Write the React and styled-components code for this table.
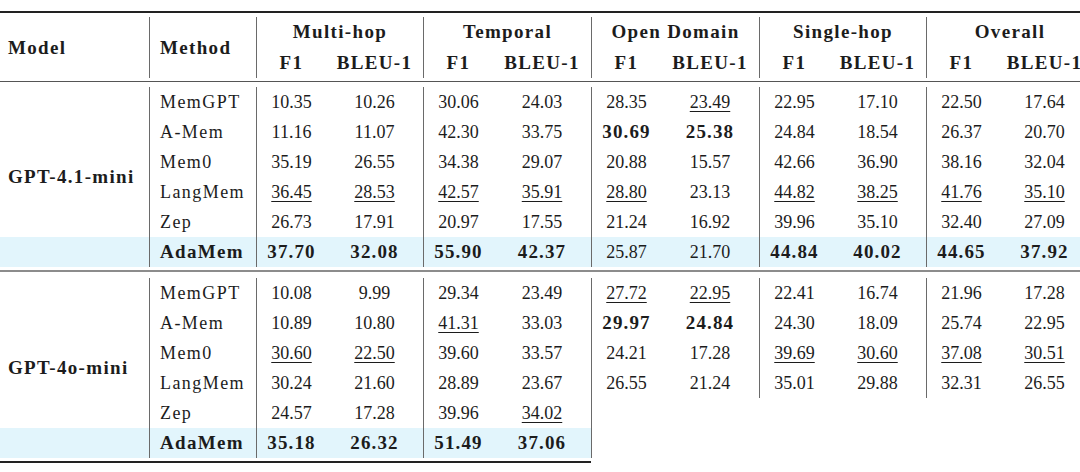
import React from 'react';
import styled, { createGlobalStyle } from 'styled-components';

const GlobalStyle = createGlobalStyle`
  html, body {
    margin: 0;
    background: #fff;
    overflow: hidden;
  }
  body {
    font-family: "Liberation Serif", "Times New Roman", serif;
    color: #1c1c1c;
  }
`;

const HL = '#e2f5fc';
const LINE = '1px solid #6a6a6a';

const Table = styled.table`
  margin-top: 11px;
  width: 1093px;
  table-layout: fixed;
  border-collapse: separate;
  border-spacing: 0;
`;

const Col = styled.col`
  width: ${p => p.$w}px;
`;

const RuleCell = styled.td`
  height: ${p => p.$h}px;
  padding: 0;
  font-size: 0;
  line-height: 0;
  background: ${p => p.$c || 'transparent'};
`;

const HeadCell = styled.th`
  height: ${p => p.$h || 30}px;
  padding: 0 0 0 ${p => p.$pl || 0}px;
  font-size: 19px;
  font-weight: bold;
  letter-spacing: 0.07em;
  text-align: ${p => (p.$left ? 'left' : 'center')};
  vertical-align: middle;
  white-space: nowrap;
  border-left: ${p => (p.$start ? LINE : 'none')};
`;

const ModelCell = styled.td`
  padding: 0 0 0 8px;
  font-size: 19px;
  font-weight: bold;
  letter-spacing: 0.07em;
  vertical-align: middle;
  white-space: nowrap;
  background: linear-gradient(
    to bottom,
    transparent calc(100% - 30px),
    ${HL} calc(100% - 30px)
  );
`;

const MethodCell = styled.td`
  height: 30px;
  padding: 0 0 0 10px;
  font-size: ${p => (p.$b ? 19 : 18)}px;
  font-weight: ${p => (p.$b ? 'bold' : 'normal')};
  letter-spacing: ${p => (p.$b ? '0.07em' : '0.08em')};
  white-space: nowrap;
  border-left: ${LINE};
  background: ${p => (p.$hl ? HL : 'transparent')};
`;

const Cell = styled.td`
  height: 30px;
  padding: 0;
  font-size: 18px;
  text-align: center;
  vertical-align: middle;
  white-space: nowrap;
  border-left: ${p => (p.$start ? LINE : 'none')};
  background: ${p => (p.$hl ? HL : 'transparent')};
`;

const Num = styled.span`
  font-size: ${p => (p.$b ? 19 : 18)}px;
  font-weight: ${p => (p.$b ? 'bold' : 'normal')};
  letter-spacing: ${p => (p.$b ? '0.06em' : '0')};
  text-decoration: ${p => (p.$u ? 'underline' : 'none')};
  text-decoration-thickness: 1px;
  text-underline-offset: 3px;
`;

const widths = [149, 107, 70, 97, 70, 98, 70, 98, 70, 97, 70, 97];
const groups = ['Multi-hop', 'Temporal', 'Open Domain', 'Single-hop', 'Overall'];

const data = [
  {
    model: 'GPT-4.1-mini',
    rows: [
      ['MemGPT', '10.35 10.26 30.06 24.03 28.35 _23.49 22.95 17.10 22.50 17.64'],
      ['A-Mem', '11.16 11.07 42.30 33.75 *30.69 *25.38 24.84 18.54 26.37 20.70'],
      ['Mem0', '35.19 26.55 34.38 29.07 20.88 15.57 42.66 36.90 38.16 32.04'],
      ['LangMem', '_36.45 _28.53 _42.57 _35.91 _28.80 23.13 _44.82 _38.25 _41.76 _35.10'],
      ['Zep', '26.73 17.91 20.97 17.55 21.24 16.92 39.96 35.10 32.40 27.09'],
      ['AdaMem', '*37.70 *32.08 *55.90 *42.37 25.87 21.70 *44.84 *40.02 *44.65 *37.92']
    ]
  },
  {
    model: 'GPT-4o-mini',
    rows: [
      ['MemGPT', '10.08 9.99 29.34 23.49 _27.72 _22.95 22.41 16.74 21.96 17.28'],
      ['A-Mem', '10.89 10.80 _41.31 33.03 *29.97 *24.84 24.30 18.09 25.74 22.95'],
      ['Mem0', '_30.60 _22.50 39.60 33.57 24.21 17.28 _39.69 _30.60 _37.08 _30.51'],
      ['LangMem', '30.24 21.60 28.89 23.67 26.55 21.24 35.01 29.88 32.31 26.55'],
      ['Zep', '24.57 17.28 39.96 _34.02 - - - - - -'],
      ['AdaMem', '*35.18 *26.32 *51.49 *37.06 - - - - - -']
    ]
  }
];

const Rule = ({ h, c }) => (
  <tr>
    <RuleCell colSpan={12} $h={h} $c={c} />
  </tr>
);

const value = (raw, i, isAda) => {
  if (raw === '-') {
    // faded-out part of the original picture
    return <Cell key={i} $start={i === 4} />;
  }
  const b = raw[0] === '*';
  const u = raw[0] === '_';
  const v = b || u ? raw.slice(1) : raw;
  return (
    <Cell key={i} $start={i % 2 === 0} $hl={isAda}>
      <Num $b={b} $u={u}>{v}</Num>
    </Cell>
  );
};

const Group = ({ model, rows }) => (
  <>
    {rows.map(([method, vals], r) => {
      const isAda = method === 'AdaMem';
      return (
        <tr key={method}>
          {r === 0 && <ModelCell rowSpan={rows.length}>{model}</ModelCell>}
          <MethodCell $b={isAda} $hl={isAda}>{method}</MethodCell>
          {vals.split(' ').map((raw, i) => value(raw, i, isAda))}
        </tr>
      );
    })}
  </>
);

export default function App() {
  return (
    <>
      <GlobalStyle />
      <Table>
        <colgroup>
          {widths.map((w, i) => <Col key={i} $w={w} />)}
        </colgroup>
        <thead>
          <Rule h={2} c="#222" />
          <Rule h={4} />
          <tr>
            <HeadCell rowSpan={2} $left $pl={8}>Model</HeadCell>
            <HeadCell rowSpan={2} $left $pl={10} $start>Method</HeadCell>
            {groups.map(g => (
              <HeadCell key={g} colSpan={2} $start>{g}</HeadCell>
            ))}
          </tr>
          <tr>
            {groups.map(g => (
              <React.Fragment key={g}>
                <HeadCell $h={31} $start>F1</HeadCell>
                <HeadCell $h={31}>BLEU-1</HeadCell>
              </React.Fragment>
            ))}
          </tr>
          <Rule h={3} />
          <Rule h={1} c="#555" />
        </thead>
        <tbody>
          <Rule h={5} />
          <Group {...data[0]} />
          <Rule h={3} />
          <Rule h={2} c="#8c8c8c" />
          <Rule h={6} />
          <Group {...data[1]} />
          <Rule h={3} />
          <tr>
            <RuleCell colSpan={6} $h={2} $c="#222" />
            <RuleCell colSpan={6} $h={2} />
          </tr>
        </tbody>
      </Table>
    </>
  );
}
